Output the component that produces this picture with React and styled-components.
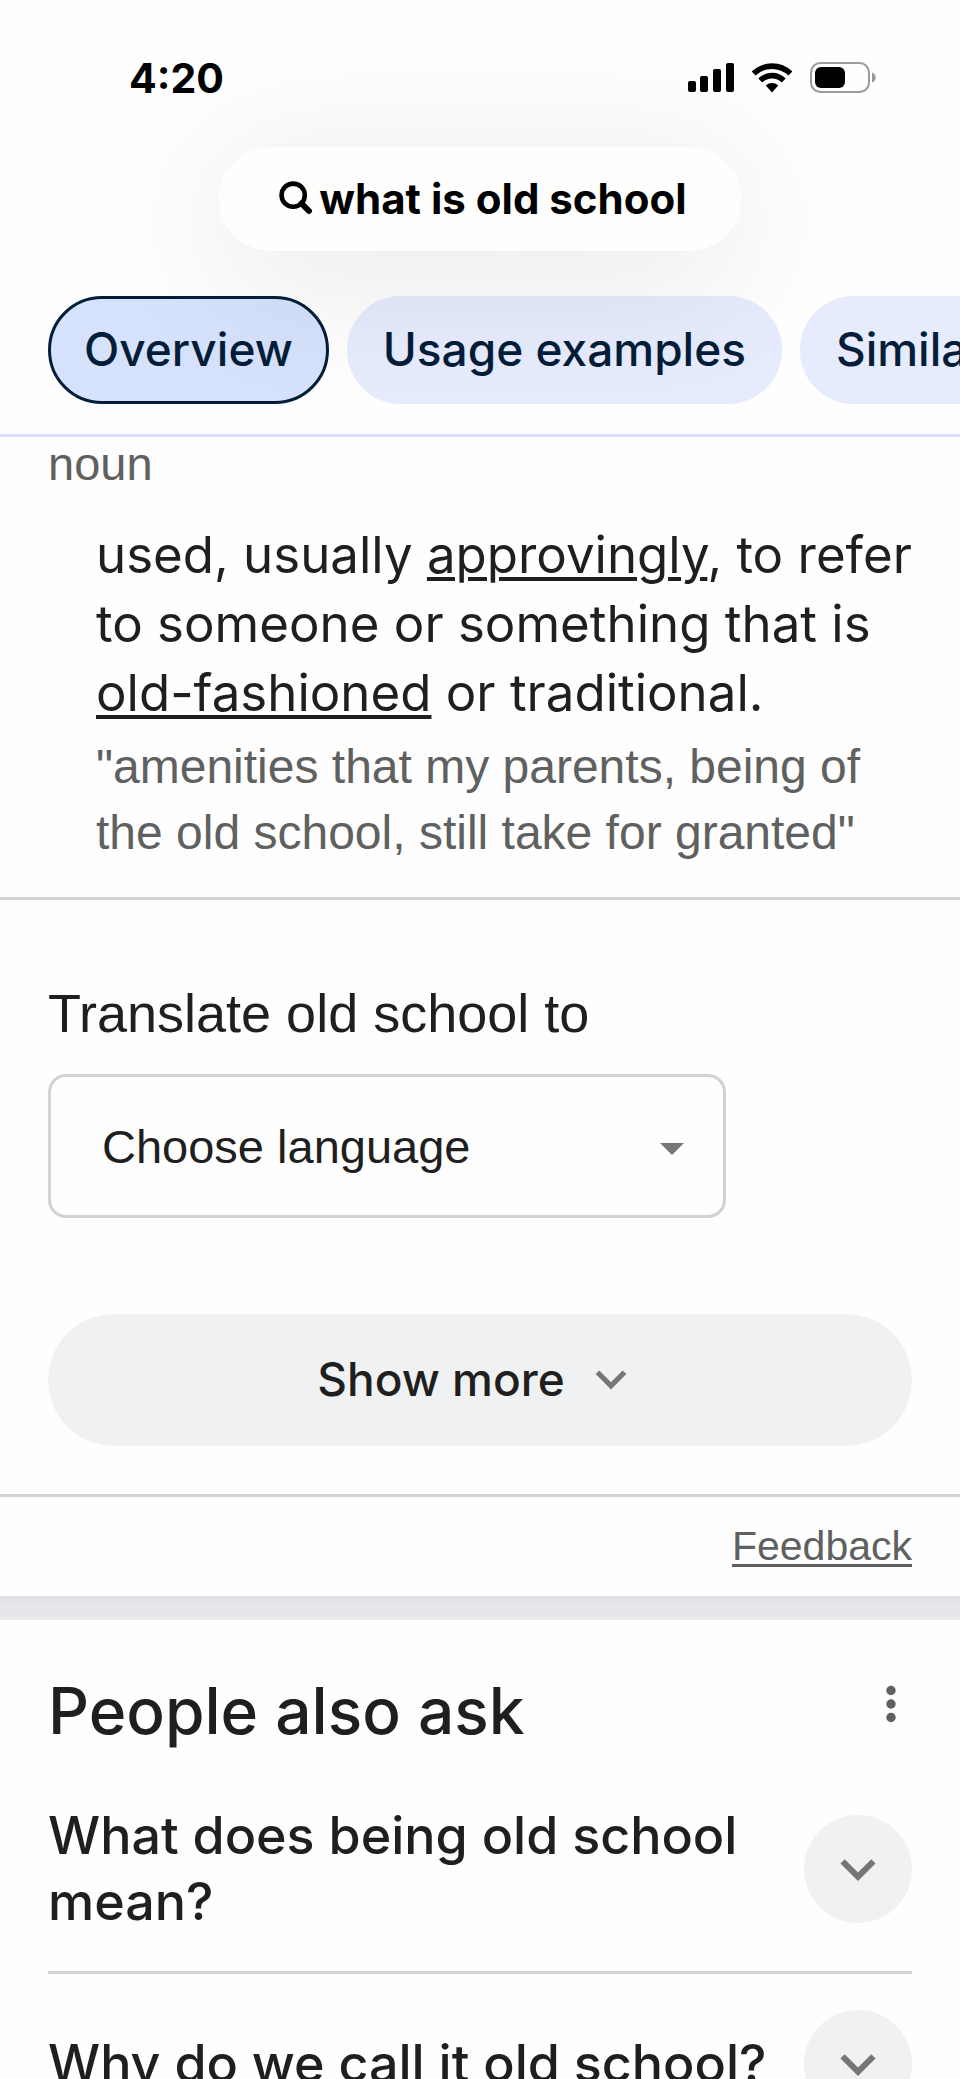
import React from "react";
import styled, { createGlobalStyle } from "styled-components";

const tabs = ["Overview", "Usage examples", "Similar and opposite words"];

const questions = [
  "What does being old school mean?",
  "Why do we call it old school?",
];

function SignalIcon() {
  return (
    <svg width="46" height="30" viewBox="0 0 46 30" aria-hidden="true">
      <rect x="0" y="18" width="8" height="11" rx="2" />
      <rect x="12" y="13" width="8" height="16" rx="2" />
      <rect x="25" y="6" width="8" height="23" rx="2" />
      <rect x="38" y="0" width="8" height="29" rx="2" />
    </svg>
  );
}

function WifiIcon() {
  return (
    <svg width="42" height="30" viewBox="0 0 42 30" aria-hidden="true">
      <g fill="none" stroke="#000" strokeWidth="5.6">
        <path d="M2.6 10.6 A26.5 26.5 0 0 1 39.4 10.6" />
        <path d="M9.3 17.4 A16.6 16.6 0 0 1 32.7 17.4" />
      </g>
      <path d="M14.8 22.6 A9 9 0 0 1 27.2 22.6 L21 29.4 Z" />
    </svg>
  );
}

function BatteryIcon() {
  return (
    <svg width="66" height="31" viewBox="0 0 66 31" aria-hidden="true">
      <rect
        x="1"
        y="1"
        width="58"
        height="29"
        rx="9.5"
        fill="none"
        stroke="#9b9b9b"
        strokeWidth="2"
      />
      <rect x="5" y="5" width="30" height="21" rx="6" />
      <path d="M62 10.5 C67 12 67 19 62 20.5 Z" fill="#9b9b9b" />
    </svg>
  );
}

function SearchIcon() {
  return (
    <svg width="34" height="34" viewBox="0 0 34 34" aria-hidden="true">
      <g fill="none" stroke="#000">
        <circle cx="14.2" cy="14.2" r="11.6" strokeWidth="4.6" />
        <path d="M22.5 22.5 L30 30" strokeWidth="6" strokeLinecap="round" />
      </g>
    </svg>
  );
}

function ChevronIcon({ size, stroke }) {
  return (
    <svg width={size} height={size} viewBox="0 0 54 54" aria-hidden="true">
      <path
        d="M14 20.5 L27 33.5 L40 20.5"
        fill="none"
        stroke="#747775"
        strokeWidth={stroke}
      />
    </svg>
  );
}

function App() {
  return (
    <Page>
      <GlobalStyle />
      <Header>
        <StatusBar>
          <time>4:20</time>
          <div className="status_icons">
            <SignalIcon />
            <WifiIcon />
            <BatteryIcon />
          </div>
        </StatusBar>
        <SearchPill type="button">
          <SearchIcon />
          <span>what is old school</span>
        </SearchPill>
        <Tabs>
          {tabs.map((tab, index) => (
            <Tab key={tab} type="button" $active={index === 0}>
              {tab}
            </Tab>
          ))}
        </Tabs>
      </Header>

      <Meaning>
        <div className="word_type">noun</div>
        <p className="definition">
          used, usually <a href="#approvingly">approvingly</a>, to refer to
          someone or something that is <a href="#old-fashioned">old-fashioned</a>{" "}
          or traditional.
        </p>
        <p className="example">
          "amenities that my parents, being of the old school, still take for
          granted"
        </p>
      </Meaning>

      <Translate>
        <label htmlFor="language">Translate old school to</label>
        <SelectBox>
          <select id="language" defaultValue="">
            <option value="">Choose language</option>
          </select>
          <svg width="24" height="12" viewBox="0 0 24 12" aria-hidden="true">
            <path d="M0 0 H24 L12 12 Z" fill="#747775" />
          </svg>
        </SelectBox>
        <ShowMore type="button">
          Show more
          <ChevronIcon size={56} stroke={5} />
        </ShowMore>
      </Translate>

      <Feedback>
        <a href="#feedback">Feedback</a>
      </Feedback>
      <Divider />

      <PeopleAsk>
        <div className="ask_header">
          <h2>People also ask</h2>
          <MenuButton type="button" aria-label="About this result">
            <svg width="10" height="38" viewBox="0 0 10 38" aria-hidden="true">
              <circle cx="5" cy="5.5" r="4.7" />
              <circle cx="5" cy="19" r="4.7" />
              <circle cx="5" cy="32.5" r="4.7" />
            </svg>
          </MenuButton>
        </div>
        {questions.map((question) => (
          <Question key={question}>
            <h3>{question}</h3>
            <ExpandButton type="button" aria-label={question}>
              <ChevronIcon size={64} stroke={5} />
            </ExpandButton>
          </Question>
        ))}
      </PeopleAsk>
    </Page>
  );
}

const GlobalStyle = createGlobalStyle`
  * {
    box-sizing: border-box;
  }
  body {
    margin: 0;
    background: #fefefe;
  }
  h2, h3, p {
    margin: 0;
    font-weight: 500;
  }
  button, select {
    margin: 0;
    font: inherit;
    color: inherit;
    cursor: pointer;
  }
  svg {
    flex: none;
    display: block;
  }
`;

const Page = styled.main`
  height: 100vh;
  overflow: hidden;
  background: #fefefe;
  color: #1f1f1f;
  font-family: "Liberation Sans", Arial, sans-serif;
  font-size: 47px;
`;

const Header = styled.header`
  display: flex;
  flex-direction: column;
  align-items: center;
  border-bottom: 3px solid #d6e2fb;
  font-family: Inter, sans-serif;
`;

const StatusBar = styled.div`
  width: 100%;
  height: 147px;
  padding: 8px 84px 0 129px;
  display: flex;
  align-items: center;
  justify-content: space-between;
  color: #000;
  font-size: 41px;
  font-weight: 700;
  .status_icons {
    display: flex;
    align-items: center;
    gap: 17px;
  }
`;

const SearchPill = styled.button`
  position: relative;
  z-index: 1;
  height: 104px;
  padding: 0 54px 2px 60px;
  display: flex;
  align-items: center;
  gap: 6px;
  border: none;
  border-radius: 52px;
  background: #fefffd;
  box-shadow: 0 24px 140px rgba(0, 0, 0, 0.1);
  color: #000;
  font-size: 42px;
  font-weight: 700;
  white-space: nowrap;
`;

const Tabs = styled.nav`
  width: 100%;
  padding: 45px 0 30px 48px;
  display: flex;
  gap: 18px;
  overflow: hidden;
`;

const Tab = styled.button`
  flex: none;
  height: 108px;
  padding: 0 33px 2px;
  border: 3px solid ${(p) => (p.$active ? "#041e3a" : "#e6ebfd")};
  border-radius: 54px;
  background: ${(p) => (p.$active ? "#d6e2fb" : "#e6ebfd")};
  color: #041e3a;
  font-size: 46px;
  font-weight: 500;
  white-space: nowrap;
`;

const Meaning = styled.section`
  padding: 0 48px 31px;
  border-bottom: 3px solid #d2d2d2;
  .word_type {
    color: #5f6060;
    line-height: 54px;
  }
  .definition {
    padding-left: 48px;
    margin-top: 29px;
    font-family: Inter, sans-serif;
    font-size: 51px;
    font-weight: 400;
    line-height: 69px;
  }
  .definition a {
    color: inherit;
    text-decoration-thickness: 4px;
    text-underline-offset: 4px;
  }
  .example {
    padding-left: 48px;
    margin-top: 7px;
    color: #5f6060;
    font-size: 48px;
    font-weight: 400;
    line-height: 66px;
  }
`;

const Translate = styled.section`
  padding: 80px 48px 48px;
  border-bottom: 3px solid #d2d2d2;
  label {
    display: block;
    margin-bottom: 28px;
    font-size: 54px;
    line-height: 66px;
  }
`;

const SelectBox = styled.div`
  position: relative;
  width: 79%;
  max-width: 678px;
  select {
    width: 100%;
    height: 144px;
    padding: 0 90px 0 51px;
    appearance: none;
    border: 3px solid #d2d2d2;
    border-radius: 18px;
    background: transparent;
  }
  svg {
    position: absolute;
    right: 42px;
    top: 69px;
    pointer-events: none;
  }
`;

const ShowMore = styled.button`
  width: 100%;
  height: 132px;
  margin-top: 96px;
  padding: 0 4px 2px 0;
  display: flex;
  align-items: center;
  justify-content: center;
  gap: 18px;
  border: none;
  border-radius: 66px;
  background: #f0f1f3;
  && {
    font-family: Inter, sans-serif;
    font-size: 46px;
    font-weight: 500;
  }
`;

const Feedback = styled.div`
  height: 99px;
  padding: 0 48px;
  display: flex;
  align-items: center;
  justify-content: flex-end;
  a {
    color: #5f6060;
    font-size: 41px;
    text-decoration-thickness: 3px;
    text-underline-offset: 4px;
  }
`;

const Divider = styled.div`
  height: 24px;
  border-bottom: 3px solid #ebebeb;
  background: linear-gradient(#dfe0e5, #e6e7eb 9px);
`;

const PeopleAsk = styled.section`
  padding: 51px 48px 0;
  font-family: Inter, sans-serif;
  .ask_header {
    display: flex;
    align-items: flex-start;
    justify-content: space-between;
    margin-bottom: 16px;
  }
  h2 {
    font-size: 64px;
    line-height: 80px;
  }
`;

const MenuButton = styled.button`
  width: 42px;
  height: 66px;
  padding: 0;
  display: flex;
  align-items: center;
  justify-content: center;
  border: none;
  background: none;
  fill: #5f6060;
`;

const Question = styled.div`
  padding: 36px 0;
  display: flex;
  align-items: center;
  justify-content: space-between;
  gap: 36px;
  border-bottom: 3px solid #d2d2d2;
  h3 {
    font-size: 52px;
    line-height: 66px;
  }
`;

const ExpandButton = styled.button`
  flex: none;
  width: 108px;
  height: 108px;
  padding: 0;
  display: flex;
  align-items: center;
  justify-content: center;
  border: none;
  border-radius: 50%;
  background: #f0f1f3;
`;

export default App;
